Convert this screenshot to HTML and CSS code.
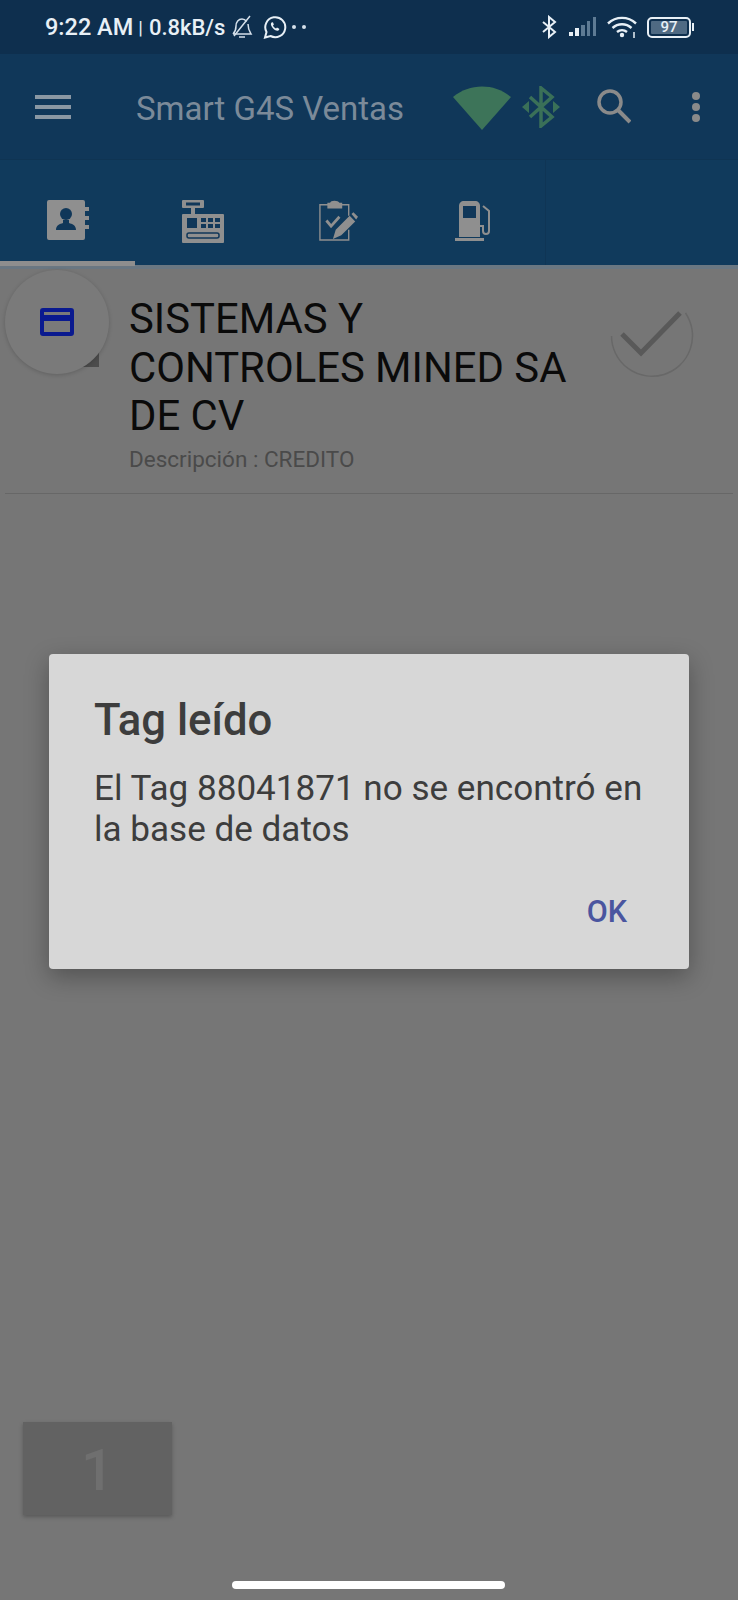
FILE: index.html

```html
<!DOCTYPE html>
<html lang="es">
<head>
<meta charset="utf-8"/>
<title>Smart G4S Ventas</title>
<meta content="width=device-width, initial-scale=1.0" name="viewport"/>
<link rel="stylesheet" href="styles.css">
</head>
<body>
<div class="screen">
  <div class="status-bar">
    <span class="clock">9:22 AM</span>
    <span class="sep">|</span>
    <span class="speed">0.8kB/s</span>
    <svg class="st-bell" width="22" height="24" viewBox="0 0 22 24" fill="none" stroke="#d5e0ea" stroke-width="1.5">
      <path d="M2 19c2-2 3-4 3-8 0-4 2.500-7 6-7 2 0 3.500 1 4.500 2.500M17 9c0 4 1 7 3 10H2"/>
      <path d="M3 21 19 1M8 22h6"/>
    </svg>
    <svg class="st-wa" width="24" height="24" viewBox="0 0 24 24" fill="none" stroke="#e8f0f6" stroke-width="2">
      <path d="M2 22.500l1.500-5.500a10 10 0 1 1 4 4z"/>
      <path d="M8.500 7.500c-1 1-.8 3 1 5.200s4.200 3.500 5.700 2.800c1-.5 1.200-1.300 1-1.800l-2.200-1.100-1 1c-1.200-.4-2.700-1.900-3-3.100l.9-1-1-2.200z" fill="#e8f0f6" stroke="none"/>
    </svg>
    <span class="st-dots"><i></i><i></i></span>
    <span class="st-right">
      <svg width="16" height="24" viewBox="0 0 16 24" fill="none" stroke="#e8f0f6" stroke-width="2">
        <path d="M2 7l12 10-6 5V2l6 5L2 17"/>
      </svg>
      <svg class="st-signal" width="29" height="20" viewBox="0 0 29 20">
        <rect x="1" y="15" width="4" height="4" fill="#e8f0f6"/>
        <rect x="7" y="11" width="4" height="8" fill="#e8f0f6"/>
        <rect x="13" y="8" width="4" height="11" fill="#5e7b94"/>
        <rect x="19" y="4" width="3" height="15" fill="#5e7b94"/>
        <rect x="25" y="0" width="3" height="19" fill="#5e7b94"/>
      </svg>
      <svg class="st-wifi" width="31" height="22" viewBox="0 0 31 22" fill="none" stroke="#e8f0f6" stroke-width="2.400">
        <path d="M1 7.500c8-7.500 20-7.500 28 0M5.500 12c5.500-5 13.500-5 19 0M10 16c3-2.500 7-2.500 10 0"/>
        <circle cx="15" cy="19" r="2.200" fill="#e8f0f6" stroke="none"/>
        <path d="M27 16v6" stroke-width="1.500"/>
      </svg>
      <span class="battery"><span class="battery-level">97</span></span>
      <span class="battery-nub"></span>
    </span>
  </div>

  <div class="app-bar">
    <div class="menu-icon"><i></i><i></i><i></i></div>
    <div class="app-title">Smart G4S Ventas</div>
    <svg class="wifi-state" width="58" height="46" viewBox="0 0 60 46" preserveAspectRatio="none">
      <path d="M0 13C17-1 43-1 60 13L30 46z" fill="#3d7459"/>
    </svg>
    <svg class="bt-state" width="38" height="42" viewBox="0 0 38 42" fill="none" stroke="#3a7058" stroke-width="3.500">
      <path d="M8 11l22 20-11 9V2l11 9L8 31"/>
      <path d="M0 21l7-6v12zM38 21l-7-6v12z" fill="#3a7058" stroke="none"/>
    </svg>
    <svg class="search" width="34" height="35" viewBox="0 0 34 35" fill="none" stroke="#8a8a8a" stroke-width="3.500">
      <circle cx="13" cy="13" r="11"/>
      <path d="M21 21l12 12" stroke-width="4"/>
    </svg>
    <div class="more"><i></i><i></i><i></i></div>
  </div>

  <div class="tabs">
    <div class="tab active">
      <svg width="44" height="44" viewBox="0 0 44 44">
        <path d="M3 1h34a2 2 0 0 1 2 2v5h4v4h-4v5h4v4h-4v5h4v4h-4v9a2 2 0 0 1-2 2H3a2 2 0 0 1-2-2V3a2 2 0 0 1 2-2z" fill="#8f8f8f"/>
        <circle cx="20" cy="15" r="6" fill="#103759"/>
        <path d="M10 31c0-5 4-6 7-7v-3h6v3c3 1 7 2 7 7z" fill="#103759"/>
      </svg>
    </div>
    <div class="tab tab-register">
      <svg width="44" height="44" viewBox="0 0 44 44">
        <rect x="1" y="1" width="22" height="8" rx="1" fill="#8f8f8f"/>
        <rect x="5" y="3.500" width="14" height="3" fill="#103759"/>
        <rect x="10" y="9" width="4" height="6" fill="#8f8f8f"/>
        <rect x="1" y="15" width="42" height="29" rx="1" fill="#8f8f8f"/>
        <rect x="6" y="19" width="10" height="10" fill="#103759"/>
        <rect x="20" y="19" width="5" height="4" fill="#103759"/>
        <rect x="27" y="19" width="5" height="4" fill="#103759"/>
        <rect x="34" y="19" width="5" height="4" fill="#103759"/>
        <rect x="20" y="25" width="5" height="4" fill="#103759"/>
        <rect x="27" y="25" width="5" height="4" fill="#103759"/>
        <rect x="34" y="25" width="5" height="4" fill="#103759"/>
        <rect x="6" y="34" width="32" height="5" rx="2" fill="none" stroke="#103759" stroke-width="1.500"/>
      </svg>
    </div>
    <div class="tab tab-orders">
      <svg width="39" height="43" viewBox="0 0 42 44" fill="none" stroke="#8f8f8f">
        <path d="M10 5H1v38h31V32M24 5h8v12" stroke-width="1.500"/>
        <path d="M9 3h3c0-3 9-3 10 0h3v6H9z" fill="#8f8f8f" stroke="none"/>
        <path d="M8 22l5 6 9-10" stroke-width="3"/>
        <path d="M15 42l3-10 15-15 6 6-15 15zM35 15l2-2 5 5-2 3z" fill="#8f8f8f" stroke="none"/>
      </svg>
    </div>
    <div class="tab tab-pump">
      <svg width="38" height="42" viewBox="0 0 38 42" fill="none">
        <path d="M4 37V6c0-3 2-5 5-5h11c3 0 5 2 5 5v31z" fill="#8f8f8f"/>
        <path d="M8 6h13v12H8z" fill="#103759"/>
        <rect x="0" y="38" width="29" height="3" fill="#8f8f8f"/>
        <path d="M28 6l6 5v20c0 4-6 4-6 0v-5h-3" stroke="#8f8f8f" stroke-width="2"/>
      </svg>
    </div>
  </div>
  <div class="tab-rule"></div>

  <div class="item">
    <div class="item-lead">
      <span class="item-corner"></span>
      <div class="item-circle">
        <svg width="34" height="28" viewBox="0 0 34 28">
          <path d="M3 0h28a3 3 0 0 1 3 3v22a3 3 0 0 1-3 3H3a3 3 0 0 1-3-3V3a3 3 0 0 1 3-3zm1 4v3h26V4zm0 9v11h26V13z" fill="#0a1a8f" fill-rule="evenodd"/>
        </svg>
      </div>
    </div>
    <div class="item-body">
      <div class="item-name">SISTEMAS Y CONTROLES MINED SA DE CV</div>
      <div class="item-desc">Descripción : CREDITO</div>
    </div>
    <div class="item-check">
      <svg width="84" height="84" viewBox="0 0 84 84" fill="none">
        <path d="M1.500 42a40.500 40.500 0 1 0 74-23" stroke="#686868" stroke-width="1.500"/>
        <path d="M12 40l19 19 39-40" stroke="#595959" stroke-width="5"/>
      </svg>
    </div>
  </div>

  <div class="counter">1</div>

  <div class="dialog">
    <div class="dialog-title">Tag leído</div>
    <div class="dialog-text">El Tag 88041871 no se encontró en la base de datos</div>
    <div class="dialog-actions"><span class="dialog-ok">OK</span></div>
  </div>

  <div class="home-pill"></div>
</div>
</body>
</html>
```

FILE: styles.css

```css
* { box-sizing: border-box; }
html, body { margin: 0; padding: 0; }
body {
  font-family: Roboto, "Liberation Sans", sans-serif;
  background: #767676;
}
.screen {
  position: relative;
  width: 738px;
  height: 1600px;
  overflow: hidden;
  background: #767676;
}

/* status bar */
.status-bar {
  display: flex;
  align-items: center;
  height: 54px;
  padding: 14px 44px 14px 45px;
  background: #0e2f4e;
  color: #e8f0f6;
}
.clock { font-size: 23.500px; font-weight: 500; }
.sep { margin: 0 6px 0 5px; font-size: 19px; font-weight: 400; }
.speed { font-size: 22px; font-weight: 500; }
.st-bell { margin-left: 6px; }
.st-wa { margin-left: 10px; }
.st-dots { display: flex; gap: 6px; margin-left: 5px; }
.st-dots i { width: 4px; height: 4px; border-radius: 50%; background: #d5e0ea; }
.st-right { display: flex; align-items: center; margin-left: auto; }
.st-signal { margin-left: 11px; }
.st-wifi { margin-left: 10px; }
.battery {
  display: flex;
  width: 44px;
  height: 21px;
  margin-left: 9px;
  padding: 2px;
  border: 2px solid #e8f0f6;
  border-radius: 5px;
}
.battery-level {
  flex: 1;
  background: #4f6a83;
  border-radius: 1px;
  font-size: 15px;
  font-weight: 500;
  line-height: 13px;
  text-align: center;
}
.battery-nub { width: 2px; height: 8px; margin-left: 1px; background: #e8f0f6; }

/* app bar */
.app-bar {
  display: flex;
  align-items: center;
  height: 106px;
  padding: 0 38px 0 35px;
  background: #103759;
  border-bottom: 1px solid #0f3453;
}
.menu-icon { display: flex; flex-direction: column; gap: 6px; width: 36px; }
.menu-icon i { height: 4px; background: #8a97a3; }
.app-title { margin: 3px 0 0 65px; font-size: 33px; color: #7b8a99; }
.wifi-state { margin-left: 49px; }
.bt-state { margin-left: 11px; }
.search { margin-left: 37px; }
.more { display: flex; flex-direction: column; gap: 3px; margin-left: auto; }
.more i { width: 8px; height: 8px; border-radius: 50%; background: #8a8a8a; }

/* tabs */
.tabs {
  display: flex;
  height: 105px;
  background: #103a5c;
}
.tab {
  position: relative;
  display: flex;
  align-items: center;
  justify-content: center;
  width: 136px;
  padding-top: 16px;
}
.tab-register { padding-right: 2px; }
.tab-orders { padding-right: 4px; }
.tab-pump { width: 138px; padding-right: 5px; border-right: 1px solid #0f3555; }
.tab-rule { height: 4px; background: #6a7782; }
.tab.active::after {
  content: "";
  position: absolute;
  left: 0;
  right: 1px;
  bottom: -1px;
  height: 5px;
  background: #8e8e8e;
}

/* list item */
.item {
  display: flex;
  height: 225px;
  margin: 0 5px;
  border-bottom: 1.500px solid #676767;
}
.item-lead { position: relative; flex: none; width: 124px; }
.item-circle {
  position: absolute;
  left: 0;
  top: 1px;
  display: flex;
  align-items: center;
  justify-content: center;
  width: 104px;
  height: 104px;
  border-radius: 50%;
  background: #7a7a7a;
  box-shadow: 0 1px 4px rgba(0, 0, 0, 0.18);
}
.item-corner {
  position: absolute;
  left: 74px;
  top: 82px;
  width: 20px;
  height: 16px;
  background: #4c4c4c;
}
.item-body { flex: 1; padding-top: 26px; }
.item-name { font-size: 41.800px; line-height: 48.500px; color: #0a0a0a; }
.item-desc { margin-top: 4px; font-size: 22.500px; line-height: 28px; color: #4a4a4a; }
.item-check { flex: none; width: 128px; padding: 25px 0 0 5px; }

/* floating counter */
.counter {
  position: absolute;
  left: 23px;
  top: 1422px;
  width: 149px;
  height: 93px;
  background: #626262;
  box-shadow: 0 2px 4px rgba(0, 0, 0, 0.25);
  font-size: 58px;
  font-weight: 500;
  line-height: 97px;
  text-align: center;
  color: #6f6f6f;
}

/* dialog */
.dialog {
  position: absolute;
  left: 49px;
  top: 654px;
  display: flex;
  flex-direction: column;
  width: 640px;
  height: 315px;
  padding: 43px 40px 0 45px;
  background: #d7d7d7;
  border-radius: 4px;
  box-shadow: 0 8px 24px rgba(0, 0, 0, 0.3);
  color: #3d3d3d;
}
.dialog-title { font-size: 43.700px; line-height: 46px; font-weight: 500; }
.dialog-text { margin-top: 25px; font-size: 35.100px; line-height: 41px; }
.dialog-actions { display: flex; justify-content: flex-end; margin-top: 45px; padding-right: 22px; }
.dialog-ok { font-size: 30.500px; line-height: 34px; font-weight: 500; color: #4a559f; }

.home-pill {
  position: absolute;
  left: 232px;
  top: 1581px;
  width: 273px;
  height: 8px;
  border-radius: 4px;
  background: #fff;
}
```
